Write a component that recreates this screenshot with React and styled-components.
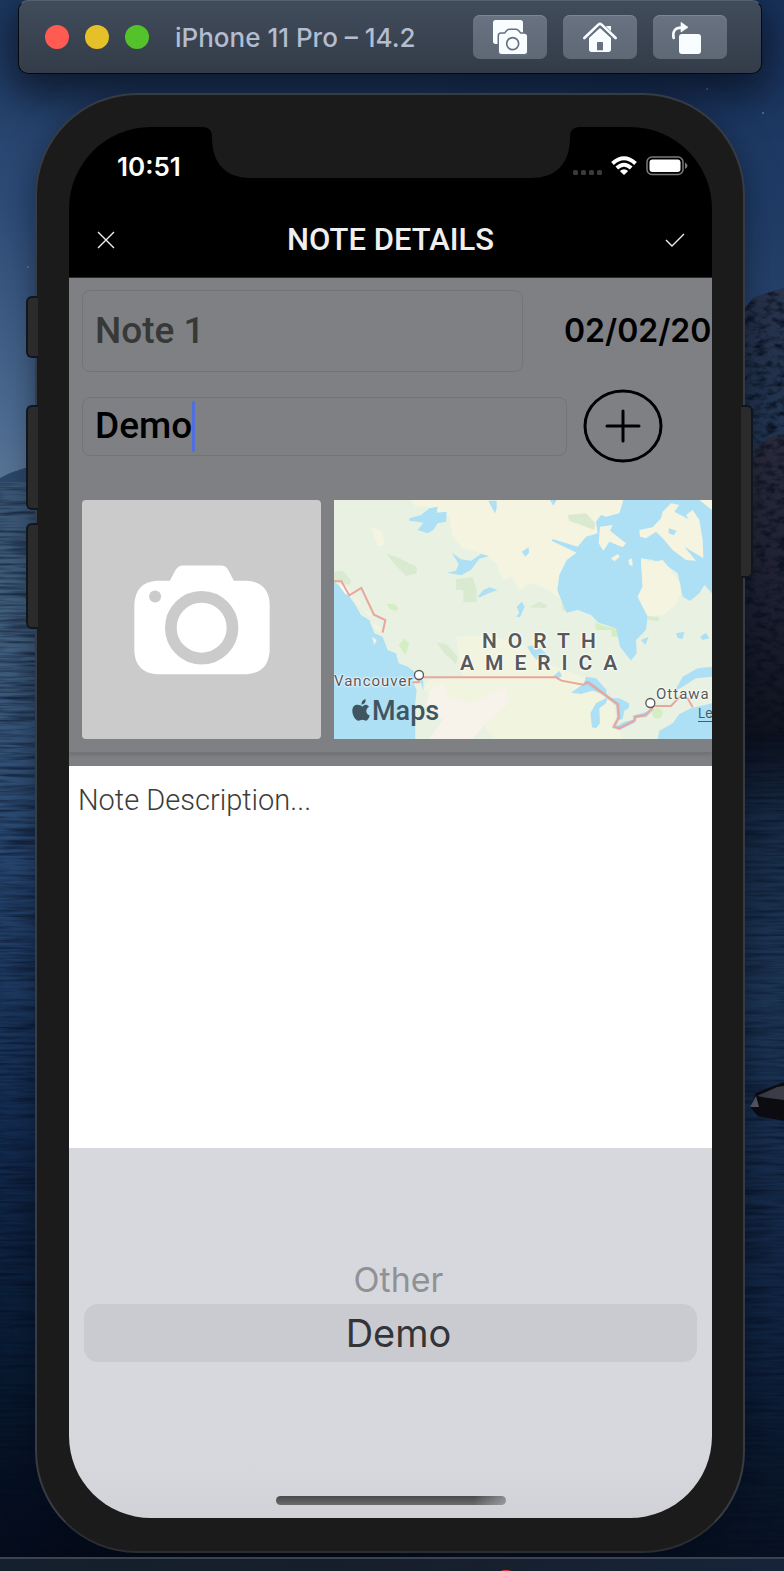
import React, { useState } from "react";
import styled, { createGlobalStyle } from "styled-components";

const GlobalStyle = createGlobalStyle`
  * { box-sizing: border-box; }
  body { margin: 0; background: #0b1a30; }
  button, input, textarea { font: inherit; color: inherit; }
`;

const inter = `Inter, "Liberation Sans", sans-serif`;
const roboto = `Roboto, "Liberation Sans", sans-serif`;

const Desktop = styled.div`
  position: relative;
  min-height: 100vh;
  display: flex;
  flex-direction: column;
  overflow: hidden;
  font-family: ${inter};
`;

const WallpaperArt = styled.svg`
  position: absolute;
  inset: 0;
  width: 100%;
  height: 100%;
  z-index: 0;
`;

const WindowBar = styled.header`
  position: relative;
  display: flex;
  align-items: center;
  height: 74px;
  margin: 0 22px 0 18px;
  padding: 0 34px 0 26px;
  border: 1px solid #05080e;
  border-top-color: #56606e;
  border-radius: 10px;
  background: linear-gradient(#414c5b, #333c48);
  box-shadow: 0 14px 40px 8px rgba(5, 12, 26, 0.7);
`;

const TrafficLights = styled.div`
  display: flex;
  gap: 16px;
`;

const TrafficLight = styled.button`
  width: 24px;
  height: 24px;
  padding: 0;
  border: 0;
  border-radius: 50%;
  background: ${(p) => p.$color};
`;

const WindowTitle = styled.h1`
  flex: 1;
  margin: 0 0 0 26px;
  padding-top: 2px;
  font-size: 26px;
  line-height: 32px;
  font-weight: 500;
  color: #b4bccf;
  white-space: nowrap;
`;

const ToolGroup = styled.div`
  display: flex;
  gap: 16px;
`;

const ToolButton = styled.button`
  display: flex;
  width: 74px;
  height: 44px;
  padding: 0;
  border: 0;
  border-radius: 7px;
  overflow: hidden;
  background: linear-gradient(#687281, #5f6875);
  box-shadow: inset 0 1px 0 #7d8694;

  svg { width: 74px; height: 44px; }
`;

const Phone = styled.main`
  position: relative;
  margin: 19px 39px 0 35px;
  padding: 32px 31px 33px 32px;
  border: 2px solid #373c44;
  border-bottom-color: #2b2d31;
  border-radius: 102px;
  background: #1b1b1b;
  box-shadow: 0 10px 34px rgba(2, 8, 20, 0.5);
`;

const SideKey = styled.span`
  position: absolute;
  top: ${(p) => p.$top}px;
  height: ${(p) => p.$height}px;
  width: 12px;
  background: #2b2b2b;
  border: 2px solid #10161f;
  ${(p) =>
    p.$side === "left"
      ? "left: -11px; border-right: 0; border-radius: 6px 0 0 6px;"
      : "right: -10px; border-left: 0; border-radius: 0 6px 6px 0;"}
`;

const Screen = styled.div`
  position: relative;
  display: flex;
  flex-direction: column;
  overflow: hidden;
  border-radius: 82px;
  background: #000;
`;

const NotchArt = styled.svg`
  position: absolute;
  top: 0;
  left: 50%;
  width: 376px;
  height: 52px;
  margin-left: -188px;
`;

const StatusBar = styled.div`
  display: flex;
  align-items: center;
  justify-content: space-between;
  height: 78px;
  padding: 0 24px 0 48px;
  color: #fff;
`;

const Clock = styled.time`
  padding-top: 2px;
  font-size: 26px;
  line-height: 32px;
  font-weight: 600;
`;

const StatusArt = styled.svg`
  width: 116px;
  height: 22px;
`;

const NavBar = styled.div`
  display: grid;
  grid-template-columns: 46px 1fr 46px;
  align-items: center;
  height: 73px;
  padding: 0 14px 2px;
  border-bottom: 1px solid #2c2c2e;
  color: #efefef;
`;

const NavTitle = styled.h2`
  margin: 0;
  text-align: center;
  font-family: ${roboto};
  font-size: 31px;
  line-height: 36px;
  font-weight: 500;
`;

const NavButton = styled.button`
  display: flex;
  justify-content: center;
  padding: 12px 0;
  border: 0;
  background: none;

  svg { width: 20px; height: 20px; fill: none; stroke: currentColor; stroke-width: 1.4; }
`;

const FormPanel = styled.form`
  padding-bottom: 13px;
  background: #7f8084;
`;

const DetailsCard = styled.div`
  display: flex;
  flex-direction: column;
  padding: 12px 0 13px 13px;
  border-bottom: 1px solid #737478;
  box-shadow: 0 2px 4px rgba(0, 0, 0, 0.14);
`;

const FieldStack = styled.div`
  display: flex;
  flex-direction: column;
  gap: 17px;
`;

const FieldRow = styled.div`
  display: flex;
  align-items: center;
  overflow: hidden;
`;

const FieldBox = styled.label`
  display: flex;
  align-items: center;
  height: ${(p) => p.$height}px;
  flex: 0 1 ${(p) => p.$basis}%;
  padding: 0 12px;
  border: 1px solid #737478;
  border-radius: 8px;
  color: ${(p) => p.$color};
`;

const TextInput = styled.input`
  field-sizing: content;
  min-width: 0;
  max-width: 100%;
  padding: 0;
  border: 0;
  outline: 0;
  background: none;
  font-family: ${roboto};
  font-size: 37px;
  line-height: 48px;
  font-weight: 500;
  caret-color: transparent;
`;

const Caret = styled.span`
  width: 3px;
  height: 51px;
  border-radius: 2px;
  background: #4f6fdc;
`;

const DateText = styled.time`
  flex: none;
  margin-left: 41px;
  font-size: 32px;
  line-height: 48px;
  font-weight: 600;
  color: #000;
  white-space: nowrap;
`;

const AddButton = styled.button`
  display: flex;
  flex: none;
  margin-left: 16px;
  padding: 0;
  border: 0;
  background: none;

  svg { width: 80px; height: 74px; fill: none; stroke: #000; stroke-width: 3; }
`;

const MediaRow = styled.div`
  display: flex;
  gap: 13px;
  height: 239px;
  margin-top: 37px;
`;

const PhotoButton = styled.button`
  display: flex;
  align-items: center;
  justify-content: center;
  flex: 0 0 239px;
  padding: 0 0 0 0;
  border: 0;
  border-radius: 4px;
  background: #cbcbcb;

  svg { width: 136px; height: 110px; }
`;

const MapView = styled.div`
  position: relative;
  flex: 1;
  min-width: 0;
  overflow: hidden;
  background: #aee0f5;
  color: #58595b;
`;

const MapArt = styled.svg`
  display: block;
  height: 239px;
  width: 378px;
`;

const MapLabel = styled.span`
  position: absolute;
  left: ${(p) => p.$x}px;
  top: ${(p) => p.$y}px;
  font-family: ${roboto};
  font-size: ${(p) => p.$size}px;
  line-height: 22px;
  font-weight: ${(p) => p.$weight || 400};
  letter-spacing: ${(p) => p.$tracking || 0}px;
  white-space: nowrap;
  color: ${(p) => p.$color || "#58595b"};
  text-shadow: ${(p) => (p.$halo ? "0 0 2px #fff, 0 0 2px #fff, 0 0 3px #fff" : "none")};
`;

const LegalLink = styled.a`
  position: absolute;
  left: 364px;
  top: 204px;
  font-size: 13px;
  line-height: 18px;
  color: #4a5c66;
  text-underline-offset: 3px;
`;

const Description = styled.textarea`
  display: block;
  height: 382px;
  padding: 16px 9px;
  border: 0;
  outline: 0;
  resize: none;
  background: #fff;
  color: #3c3c3c;
  font-family: ${roboto};
  font-size: 29px;
  line-height: 36px;
  font-weight: 300;

  &::placeholder { color: #3c3c3c; opacity: 1; }
`;

const Picker = styled.div`
  display: flex;
  flex-direction: column;
  min-height: 370px;
  padding: 107px 15px 13px;
  background: linear-gradient(#d7d8dd 84%, #d1d2d8);
`;

const PickerOption = styled.label`
  display: flex;
  align-items: center;
  justify-content: center;
  height: ${(p) => (p.$selected ? 58 : 49)}px;
  padding-left: 16px;
  border-radius: 14px;
  background: ${(p) => (p.$selected ? "#cacbd0" : "transparent")};
  color: ${(p) => (p.$selected ? "#343437" : "#909195")};
  font-size: ${(p) => (p.$selected ? 38 : 34)}px;
  line-height: 48px;
`;

const HiddenRadio = styled.input`
  appearance: none;
  position: absolute;
  width: 1px;
  height: 1px;
  margin: 0;
  opacity: 0;
`;

const HomeIndicator = styled.div`
  align-self: center;
  width: 230px;
  height: 9px;
  margin-top: auto;
  border-radius: 5px;
  background: linear-gradient(90deg, transparent 86%, rgba(215, 216, 221, 0.45)), linear-gradient(#48494b, #6b6c6e);
`;

const Dock = styled.footer`
  position: relative;
  display: flex;
  justify-content: center;
  height: 14px;
  margin-top: auto;
  overflow: hidden;
  border-top: 2px solid #3a434f;
  background: linear-gradient(90deg, #14202c, #181e2b 50%, #15243a);
`;

const Badge = styled.span`
  position: relative;
  width: 28px;
  height: 28px;
  margin: 11px 0 0 228px;
  border-radius: 50%;
  background: #e8402f;
`;

function Wallpaper() {
  return (
    <WallpaperArt viewBox="0 0 784 1571" preserveAspectRatio="none" aria-hidden="true">
      <defs>
        <linearGradient id="sky" x2="0" y2="1">
          <stop offset="0" stopColor="#1d3961" />
          <stop offset=".42" stopColor="#2d4c78" />
          <stop offset=".85" stopColor="#4d6c91" />
          <stop offset="1" stopColor="#5d7898" />
        </linearGradient>
        <linearGradient id="skyShade">
          <stop offset=".5" stopColor="#132c5a" stopOpacity="0" />
          <stop offset="1" stopColor="#16305a" stopOpacity=".6" />
        </linearGradient>
        <linearGradient id="sea" x2="0" y2="1">
          <stop offset="0" stopColor="#3a5675" />
          <stop offset=".14" stopColor="#42607f" />
          <stop offset=".34" stopColor="#284872" />
          <stop offset=".58" stopColor="#142d52" />
          <stop offset=".8" stopColor="#091c34" />
          <stop offset="1" stopColor="#050a18" />
        </linearGradient>
        <linearGradient id="seaRight" x2="0" y2="1">
          <stop offset="0" stopColor="#0d111e" />
          <stop offset=".1" stopColor="#182c46" />
          <stop offset=".3" stopColor="#1e3757" />
          <stop offset=".7" stopColor="#112543" />
          <stop offset="1" stopColor="#07101f" />
        </linearGradient>
        <linearGradient id="hill" x2="0" y2="1">
          <stop offset="0" stopColor="#29334c" />
          <stop offset=".4" stopColor="#1f3550" />
          <stop offset="1" stopColor="#131c2d" />
        </linearGradient>
        <linearGradient id="nearHill" x2="0" y2="1">
          <stop offset="0" stopColor="#2b2b3c" />
          <stop offset=".5" stopColor="#1e2131" />
          <stop offset="1" stopColor="#0e111c" />
        </linearGradient>
        <filter id="ripples" x="0" y="0" width="100%" height="100%" colorInterpolationFilters="sRGB">
          <feTurbulence type="fractalNoise" baseFrequency=".018 .3" numOctaves="3" seed="4" />
          <feColorMatrix values="0 0 0 0 .02  0 0 0 0 .05  0 0 0 0 .12  2.2 0 0 0 -.85" />
        </filter>
        <filter id="rough" x="0" y="0" width="100%" height="100%" colorInterpolationFilters="sRGB">
          <feTurbulence type="fractalNoise" baseFrequency=".09 .16" numOctaves="3" seed="9" result="n" />
          <feColorMatrix values="0 0 0 0 .03  0 0 0 0 .06  0 0 0 0 .12  2.2 0 0 0 -.95" />
          <feComposite in2="SourceGraphic" operator="in" result="t" />
          <feMerge>
            <feMergeNode in="SourceGraphic" />
            <feMergeNode in="t" />
          </feMerge>
        </filter>
      </defs>
      <rect width="784" height="500" fill="url(#sky)" />
      <rect width="784" height="500" fill="url(#skyShade)" />
      <path d="M0 478 L10 473 L28 467 L400 430 V520 H0Z" fill="#2c4769" />
      <rect y="482" width="400" height="1089" fill="url(#sea)" />
      <g filter="url(#rough)">
        <path d="M700 330 L745 308 L754 297 L784 288 V760 H700Z" fill="url(#hill)" />
        <path d="M700 480 L752 451 L768 438 L784 434 V760 H700Z" fill="url(#nearHill)" />
      </g>
      <rect x="400" y="735" width="384" height="836" fill="url(#seaRight)" />
      <rect y="482" width="400" height="1089" filter="url(#ripples)" opacity=".6" />
      <rect x="400" y="735" width="384" height="836" filter="url(#ripples)" opacity=".55" />
      <path d="M750 1107 L756 1093 L776 1085 L784 1082 V1121 L758 1116Z" fill="#0c0c11" />
      <path d="M757 1096 L777 1087 L784 1086 V1100 L768 1098Z" fill="#3c3d47" />
      <path d="M750 1107 L756 1096 L759 1107Z" fill="#5a5f6b" />
      <g fill="#5f7ca3">
        <circle cx="28" cy="267" r="1" />
        <circle cx="763" cy="113" r="1" />
        <circle cx="707" cy="89" r="1" />
      </g>
    </WallpaperArt>
  );
}

const ScreenshotIcon = () => (
  <svg viewBox="0 0 222 132" aria-hidden="true">
    <rect x="60" y="15" width="90" height="72" rx="8" fill="#f8fdff" />
    <path
      d="M84 56H96L103 48Q106 45 110 45H128Q132 45 135 48L142 56H154Q162 56 162 64V109Q162 117 154 117H86Q78 117 78 109V62Q78 56 84 56Z"
      fill="#f8fdff" stroke="#657080" strokeWidth="9" paintOrder="stroke"
    />
    <circle cx="119" cy="86" r="18" fill="none" stroke="#657080" strokeWidth="5" />
  </svg>
);

const HomeIcon = () => (
  <svg viewBox="0 0 222 132" aria-hidden="true">
    <path d="M130 33H144V56L130 44Z" fill="#f8fdff" />
    <path d="M111 38L144 68V103Q144 111 136 111H86Q78 111 78 103V68Z" fill="#f8fdff" />
    <path d="M102 106V83Q102 81 104 81H118Q120 81 120 83V106Z" fill="#657080" />
    <path d="M65 70L111 28L157 70" fill="none" stroke="#657080" strokeWidth="15" strokeLinejoin="round" />
    <path d="M64 69L106 29Q111 24 116 29L158 69" fill="none" stroke="#f8fdff" strokeWidth="8" strokeLinecap="round" />
  </svg>
);

const RotateIcon = () => (
  <svg viewBox="0 0 222 132" aria-hidden="true">
    <rect x="78" y="57" width="66" height="60" rx="9" fill="#f8fdff" />
    <path d="M62 69Q56 38 86 38" fill="none" stroke="#f8fdff" strokeWidth="8" strokeLinecap="round" />
    <path d="M84 22L105 37L84 51Z" fill="#f8fdff" stroke="#f8fdff" strokeWidth="2" strokeLinejoin="round" />
  </svg>
);

const StatusIcons = () => (
  <StatusArt viewBox="0 0 116 22" aria-label="Wi-Fi connected, battery full">
    <g fill="#3a3a3a">
      {[0, 8, 16, 24].map((x) => (
        <rect key={x} x={x + 1} y="15" width="5" height="5" rx="1.5" />
      ))}
    </g>
    <g fill="none" stroke="#fff" strokeWidth="4">
      <path d="M40.5 8.5Q52 -2 63.5 8.5" />
      <path d="M44.8 13Q52 6.5 59.2 13" />
    </g>
    <path d="M47.8 15.9Q52 12.5 56.2 15.9L52 20Z" fill="#fff" />
    <rect x="75" y="2" width="36" height="17.5" rx="5" fill="none" stroke="#7a7a7a" strokeWidth="1.5" />
    <rect x="77.5" y="4.5" width="31" height="12.5" rx="3" fill="#fff" />
    <path d="M113 7.5Q115.5 9 115.5 10.7Q115.5 12.5 113 14Z" fill="#7a7a7a" />
  </StatusArt>
);

const CameraIcon = () => (
  <svg viewBox="222 231 406 328" aria-hidden="true">
    <path
      d="M290 278H329L346 246Q353 232 368 232H482Q496 232 503 245L520 278H558Q626 282 627 350V488Q622 553 558 557H290Q226 551 223 488V350Q226 282 290 278Z"
      fill="#fff"
    />
    <circle cx="285" cy="325" r="18" fill="#cbcbcb" />
    <circle cx="424" cy="418" r="92" fill="none" stroke="#cbcbcb" strokeWidth="35" />
  </svg>
);

function NorthAmericaMap() {
  return (
    <MapView>
      <MapArt viewBox="14 30 1134 717" preserveAspectRatio="none" aria-hidden="true">
        <rect x="14" y="30" width="1134" height="717" fill="#e9f2e2" />
        <path d="M245 30H890L860 120L700 330L640 290L600 280L570 300L550 260L520 270L500 220L460 190L400 175L370 140L360 80L290 50L260 50Z" fill="#f4f4e1" />
        <path d="M380 440L480 435L590 470L650 520L760 560L850 640L880 747H500L400 640L280 600L300 570L400 560Z" fill="#f1f4df" />
        <path d="M300 600L345 580L350 620L420 640L530 590L540 640L470 700L430 747H300L340 690L290 650Z" fill="#f7f2ea" />
        <path d="M125 110L160 125L165 165L145 170Z" fill="#f4f4e1" />
        <g fill="#d9ead0">
          <path d="M172 192L200 200L262 230L262 250L230 258L195 222Z" />
          <path d="M380 268L430 262L442 300V337H402V300H380Z" />
          <path d="M14 245L40 242L66 272L60 285L14 272Z" />
          <path d="M715 75L770 70L798 100L795 120L755 105L720 92Z" />
          <path d="M600 352L630 335L652 345L650 355Z" />
          <path d="M696 325L715 330L718 365L698 360Z" />
          <path d="M322 458L350 462L385 500L380 522L345 490Z" />
          <path d="M1080 30H1130L1128 55L1105 70Z" />
          <path d="M955 378L990 382L988 394L955 390Z" />
        </g>
        <g fill="#d5edc3">
          <path d="M172 342L195 342L208 354L200 364L180 356Z" />
          <path d="M208 465L225 445L240 462L228 495Z" />
          <path d="M797 398L840 412H866V440H846V420H800Z" />
          <circle cx="984" cy="670" r="16" />
        </g>
        <g fill="#aee0f5">
          <path d="M14 275L35 290L60 320L75 340L95 375L120 390L135 430L160 440L175 480L200 490L208 520L235 530L255 555L250 575L262 600L257 650L258 747H14Z" />
          <path d="M196 518L235 530L262 550L282 572V602L274 578L245 560L220 540Z" />
          <path d="M882 30L870 70L830 80L815 75L800 95L805 130L770 140L745 170L670 147L668 153L742 188L712 210L690 255L684 300L692 322L712 368L745 360L785 375L808 398L860 415L872 470L905 512L922 490L920 450L950 420L955 380L925 320L940 290L935 205L970 210L1010 225L1045 250L1060 320L1082 333L1110 310L1125 285L1148 310V30Z" />
          <path d="M240 85L275 75L300 55L325 50L322 68L352 65L350 95L325 100L312 120L295 130L265 120L282 98L240 92Z" />
          <path d="M352 248L380 242L388 222L367 188L395 208L425 212L455 192L480 198L450 206L425 240L395 256Z" />
          <path d="M445 320L462 300L480 292L505 300L478 310L452 322Z" />
          <path d="M560 380L570 368L562 350L578 335L586 350L572 382Z" />
          <path d="M577 185L598 172L599 188L588 200Z" />
          <path d="M477 32H502V55L497 70L486 50Z" />
          <path d="M662 30H682L672 47Z" />
          <path d="M594 470L612 465L615 480L632 475L655 495L655 520L640 505L622 510L605 490Z" />
          <path d="M670 560L690 542L698 558L685 566Z" />
          <path d="M725 608L765 580L770 560L800 565L832 600L830 615L790 602L755 612Z" />
          <path d="M788 712L783 670L800 640L835 622L830 640L810 655L812 700L800 715Z" />
          <path d="M832 625L870 625L900 640L898 655L885 662L880 688L868 690L862 640Z" />
          <path d="M855 712L885 695L918 688L912 700L870 718Z" />
          <path d="M905 680L960 662L955 675L920 684Z" />
          <path d="M935 450L958 440L948 465Z" />
          <path d="M1040 430L1065 425L1060 447L1045 444Z" />
          <path d="M1112 440L1130 428L1140 445L1120 450Z" />
          <path d="M1148 530L1105 535L1060 560L1035 605L1060 590L1100 565L1148 560V640L1085 655L1050 672L1030 700L990 722L985 747H1148Z" />
        </g>
        <g fill="#f4f4e1">
          <path d="M812 110L850 105L842 122L890 160L880 172L840 155L822 182L808 160Z" />
          <path d="M930 120L970 112L995 85L1000 65L1025 40L1050 45L1035 65L1078 88L1070 75L1090 60L1110 90L1120 150L1122 205L1065 170L1100 212L1070 210L1030 180L1000 145L980 125L950 145L932 140Z" />
          <path d="M845 205L865 192L872 200L855 214Z" />
          <path d="M897 210L908 205L910 228L900 225Z" />
          <path d="M935 208L970 216L1000 210L1025 240L1052 280L1055 310L1040 345L1000 375L955 378L925 320L940 290Z" />
          <path d="M1110 30H1148V60Z" />
          <path d="M75 325L95 338L90 348ZM100 355L125 372L120 382ZM122 398L155 412L150 425ZM128 440L142 450L135 465Z" />
          <path d="M28 285L55 292L70 320L48 312Z" fill="#fff7ef" />
        </g>
        <path d="M1018 115L1042 122L1034 136L1018 130Z" fill="#aee0f5" />
        <g fill="none" stroke="#a0a8cf" strokeWidth="10" opacity=".4">
          <path d="M765 580L775 577L822 611L865 643L868 682L854 710L870 715L915 692L918 680L948 676L970 656" />
        </g>
        <path
          d="M14 274H36L60 316L96 294L134 374L168 390L160 428M250 577H268V562H680L696 572L762 584L777 577L822 611L865 643L868 682L854 710L870 715L915 692L918 680L948 676L975 648H1025L1052 620L1075 625L1090 652"
          fill="none" stroke="#e9a79c" strokeWidth="6"
        />
        <g fill="#fff" stroke="#5a5a5a" strokeWidth="4">
          <circle cx="269" cy="555" r="13.5" />
          <circle cx="963" cy="639" r="13.5" />
        </g>
        <path
          d="M100 650C92 643 69 638 69 663C69 678 80 692 87 692C92 692 94 689 99 689C104 689 106 692 111 692C116 691 121 680 121 676C108 671 108 656 119 650C111 640 102 646 100 650ZM97 644C96 635 102 628 109 628C110 637 105 643 97 644Z"
          fill="#3f555f"
        />
      </MapArt>
      <MapLabel $x={148} $y={130} $size={21} $weight={600} $tracking={11} $halo>NORTH</MapLabel>
      <MapLabel $x={126} $y={152} $size={21} $weight={600} $tracking={11} $halo>AMERICA</MapLabel>
      <MapLabel $x={0} $y={170} $size={15} $tracking={1} $halo>Vancouver</MapLabel>
      <MapLabel $x={322} $y={183} $size={15} $tracking={1} $halo>Ottawa</MapLabel>
      <MapLabel $x={38} $y={200} $size={27} $weight={500} $color="#3f555f">Maps</MapLabel>
      <LegalLink href="#legal">Le</LegalLink>
    </MapView>
  );
}

const categories = ["Other", "Demo"];

export default function App() {
  const [title, setTitle] = useState("Note 1");
  const [category, setCategory] = useState("Demo");

  return (
    <>
      <GlobalStyle />
      <Desktop>
        <Wallpaper />
        <WindowBar>
          <TrafficLights>
            <TrafficLight $color="#ff5b52" aria-label="Close window" />
            <TrafficLight $color="#e6c029" aria-label="Minimize window" />
            <TrafficLight $color="#54c22b" aria-label="Zoom window" />
          </TrafficLights>
          <WindowTitle>iPhone 11 Pro – 14.2</WindowTitle>
          <ToolGroup>
            <ToolButton aria-label="Screenshot"><ScreenshotIcon /></ToolButton>
            <ToolButton aria-label="Home"><HomeIcon /></ToolButton>
            <ToolButton aria-label="Rotate"><RotateIcon /></ToolButton>
          </ToolGroup>
        </WindowBar>

        <Phone>
          <SideKey $side="left" $top={201} $height={62} />
          <SideKey $side="left" $top={310} $height={105} />
          <SideKey $side="left" $top={428} $height={106} />
          <SideKey $side="right" $top={310} $height={173} />
          <Screen>
            <NotchArt viewBox="0 0 376 52" aria-hidden="true">
              <path d="M0 0Q9 0 9 10C9 38 24 51 48 51H328C352 51 367 38 367 10Q367 0 376 0Z" fill="#1b1b1b" />
            </NotchArt>
            <StatusBar>
              <Clock>10:51</Clock>
              <StatusIcons />
            </StatusBar>
            <NavBar>
              <NavButton aria-label="Cancel">
                <svg viewBox="0 0 20 20"><path d="M2 2L18 18M18 2L2 18" /></svg>
              </NavButton>
              <NavTitle>NOTE DETAILS</NavTitle>
              <NavButton aria-label="Save">
                <svg viewBox="0 0 20 20"><path d="M1 10L7 16L19 4" /></svg>
              </NavButton>
            </NavBar>

            <FormPanel>
              <DetailsCard>
                <FieldStack>
                  <FieldRow>
                    <FieldBox $height={82} $basis={70} $color="#363936">
                      <TextInput aria-label="Title" value={title} onChange={(e) => setTitle(e.target.value)} />
                    </FieldBox>
                    <DateText>02/02/20</DateText>
                  </FieldRow>
                  <FieldRow>
                    <FieldBox $height={59} $basis={77} $color="#000">
                      <TextInput aria-label="Category" value={category} readOnly />
                      <Caret />
                    </FieldBox>
                    <AddButton type="button" aria-label="Add category">
                      <svg viewBox="0 0 80 74">
                        <ellipse cx="40" cy="37" rx="38" ry="35" />
                        <path d="M40 22V52M24 37H56" strokeLinecap="round" />
                      </svg>
                    </AddButton>
                  </FieldRow>
                </FieldStack>
                <MediaRow>
                  <PhotoButton type="button" aria-label="Add photo"><CameraIcon /></PhotoButton>
                  <NorthAmericaMap />
                </MediaRow>
              </DetailsCard>
            </FormPanel>

            <Description aria-label="Note description" placeholder="Note Description..." />

            <Picker role="radiogroup" aria-label="Category">
              {categories.map((name) => (
                <PickerOption key={name} $selected={name === category}>
                  <HiddenRadio
                    type="radio"
                    name="category"
                    value={name}
                    checked={name === category}
                    onChange={() => setCategory(name)}
                  />
                  {name}
                </PickerOption>
              ))}
              <HomeIndicator />
            </Picker>
          </Screen>
        </Phone>

        <Dock>
          <Badge />
        </Dock>
      </Desktop>
    </>
  );
}
